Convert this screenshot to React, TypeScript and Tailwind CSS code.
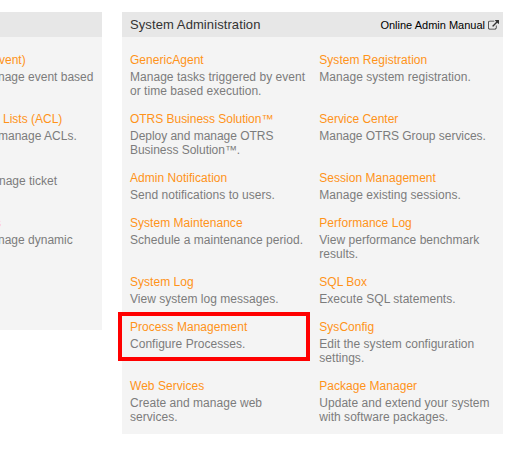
type Entry = { title: string; text: string[]; marked?: boolean; tight?: boolean };

const rows: [Entry, Entry][] = [
  [
    { title: "GenericAgent", text: ["Manage tasks triggered by event", "or time based execution."] },
    { title: "System Registration", text: ["Manage system registration."] },
  ],
  [
    { title: "OTRS Business Solution™", text: ["Deploy and manage OTRS", "Business Solution™."], tight: true },
    { title: "Service Center", text: ["Manage OTRS Group services."], tight: true },
  ],
  [
    { title: "Admin Notification", text: ["Send notifications to users."] },
    { title: "Session Management", text: ["Manage existing sessions."] },
  ],
  [
    { title: "System Maintenance", text: ["Schedule a maintenance period."] },
    { title: "Performance Log", text: ["View performance benchmark", "results."] },
  ],
  [
    { title: "System Log", text: ["View system log messages."] },
    { title: "SQL Box", text: ["Execute SQL statements."] },
  ],
  [
    { title: "Process Management", text: ["Configure Processes."], marked: true },
    { title: "SysConfig", text: ["Edit the system configuration", "settings."] },
  ],
  [
    { title: "Web Services", text: ["Create and manage web", "services."] },
    { title: "Package Manager", text: ["Update and extend your system", "with software packages."] },
  ],
];

function Item({ entry }: { entry: Entry }) {
  return (
    <div className={entry.tight ? "relative pb-[14px] tracking-[-0.03px]" : "relative pb-[14px] tracking-[0.03px]"}>
      <a className="block h-[17px] leading-[15px] text-[#ff9319]">{entry.title}</a>
      {entry.text.map((line) => (
        <p key={line} className="leading-[14px] text-[#7c7c7c]">{line}</p>
      ))}
      {entry.marked && (
        <div className="absolute -left-[12px] -top-[8px] h-[49px] w-[192px] border-4 border-[#ff0000]" />
      )}
    </div>
  );
}

function ExternalLink() {
  return (
    <svg viewBox="0 0 1792 1792" className="h-[11px] w-[11px]" fill="currentColor">
      <path d="M1408 928v320q0 119-84.5 203.5t-203.5 84.5h-832q-119 0-203.5-84.5t-84.5-203.5v-832q0-119 84.5-203.5t203.5-84.5h704q14 0 23 9t9 23v64q0 14-9 23t-23 9h-704q-66 0-113 47t-47 113v832q0 66 47 113t113 47h832q66 0 113-47t47-113v-320q0-14 9-23t23-9h64q14 0 23 9t9 23zm384-864v512q0 26-19 45t-45 19-45-19l-176-176-652 652q-10 10-23 10t-23-10l-114-114q-10-10-10-23t10-23l652-652-176-176q-19-19-19-45t19-45 45-19h512q26 0 45 19t19 45z" />
    </svg>
  );
}

export default function App() {
  return (
    <div className="flex h-[455px] w-[528px] items-start gap-5 overflow-hidden whitespace-nowrap bg-white pt-3 font-['Liberation_Sans',Arial,sans-serif] text-[12px]">
      <section className="h-[318px] w-[102px] overflow-hidden bg-[#f4f4f4]">
        <div className="h-[25px] bg-[#e7e7e7]" />
        <div className="pt-[16px]">
          <div className="h-[59px]">
            <a className="-ml-px block h-[17px] leading-[15px] text-[#ff9319]">vent)</a>
            <p className="-ml-[2px] leading-[14px] text-[#7c7c7c]">nage event based</p>
          </div>
          <div className="h-[45px]">
            <a className="ml-[3px] block h-[17px] leading-[15px] text-[#ff9319]">Lists (ACL)</a>
            <p className="-ml-[2px] leading-[14px] text-[#7c7c7c]">manage ACLs.</p>
          </div>
          <div className="h-[59px] pt-[17px]">
            <p className="-ml-[1px] leading-[14px] text-[#7c7c7c]">nage ticket</p>
          </div>
          <div className="h-[59px]">
            <a className="-ml-[5px] block h-[17px] leading-[15px] text-[#ffb8a8]">s</a>
            <p className="-ml-[2px] leading-[14px] text-[#7c7c7c]">nage dynamic</p>
          </div>
        </div>
      </section>

      <section className="h-[422px] w-[381px] bg-[#f4f4f4]">
        <header className="flex h-[25px] items-center justify-between bg-[#e7e7e7] pl-2 pr-1">
          <h2 className="pt-px text-[13px] tracking-[0.09px] text-[#333333]">System Administration</h2>
          <a className="flex items-center gap-[3px] pt-px text-[11px] text-black">
            Online Admin Manual
            <span className="text-[#333333]"><ExternalLink /></span>
          </a>
        </header>
        <div className="pl-2 pt-[16px]">
          {rows.map(([left, right]) => (
            <div key={left.title} className="grid grid-cols-[189.3px_183.7px]">
              <Item entry={left} />
              <Item entry={right} />
            </div>
          ))}
        </div>
      </section>
    </div>
  );
}
